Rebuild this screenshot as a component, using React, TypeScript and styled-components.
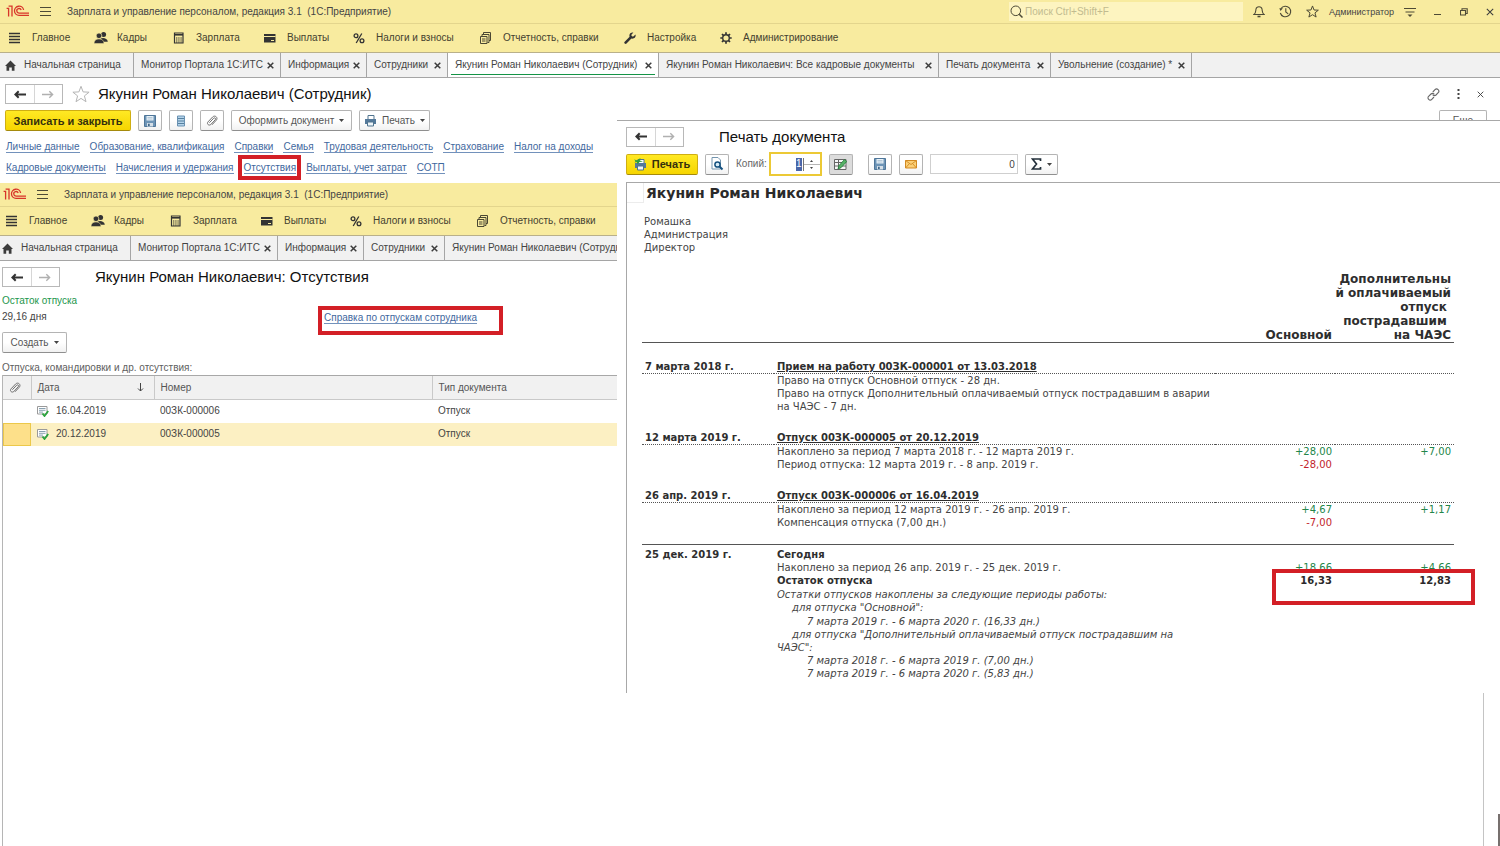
import React from "react";
import styled, { createGlobalStyle, css } from "styled-components";

const Global = createGlobalStyle`
  *, *::before, *::after { box-sizing: border-box; }
  html, body { margin: 0; background: #fff; }
  body { font: 10px/14px "Liberation Sans", Arial, sans-serif; color: #444; }
  button, input { font: inherit; color: inherit; margin: 0; padding: 0; }
  button { cursor: pointer; }
  h1, h2, p { margin: 0; font-weight: normal; }
  svg { display: block; flex: none; }
`;

/* ---------- icons ---------- */

const Svg = ({ w = 14, h = w, vb, children }: { w?: number; h?: number; vb?: string; children: React.ReactNode }) => (
  <svg width={w} height={h} viewBox={vb ?? `0 0 ${w} ${h}`} fill="none" aria-hidden="true">
    {children}
  </svg>
);

const Logo = () => (
  <Svg w={24} h={13}>
    <g stroke="#d8352a" strokeWidth="1.3">
      <path d="M.6 3.400H2.600V11.500M2.600 1.200H6V11.500" />
      <path d="M17.600 5A4.600 4.600 0 1 0 13 10.400H23" />
      <path d="M15.200 5A2.300 2.300 0 1 0 13 8.100H23" />
    </g>
  </Svg>
);
const Burger = () => (
  <Svg w={11}>
    <path d="M0 1.500h11M0 5.500h11M0 9.500h11" stroke="#4d4a36" />
  </Svg>
);
const ListIcon = () => (
  <Svg w={12}>
    <path d="M0 1.500h11M0 4.500h11M0 7.500h11M0 10.500h11" stroke="#333" strokeWidth="1.600" />
  </Svg>
);
const People = () => (
  <Svg w={14}>
    <g fill="#333">
      <circle cx="9.600" cy="3.600" r="2.500" />
      <path d="M6.600 7.600c2-1.400 6.900-.6 7.200 3.200H9Z" />
      <circle cx="5" cy="4.800" r="2.800" stroke="#f8eb9f" strokeWidth=".7" />
      <path d="M0 12.600C.2 9.200 2 8 5 8s4.800 1.200 5 4.600Z" stroke="#f8eb9f" strokeWidth=".5" />
    </g>
  </Svg>
);
const Calc = () => (
  <Svg w={12}>
    <path d="M1.500 1h8.500v10H1.500Z" stroke="#333" strokeWidth="1.200" />
    <path d="M1.500 2.800h8.500" stroke="#333" strokeWidth="1.600" />
    <path d="M3 6h6M3 8h6M3 10h6" stroke="#333" strokeWidth="1.200" strokeDasharray="1.400 .8" />
  </Svg>
);
const Card = () => (
  <Svg w={12}>
    <path d="M0 2h11.500v8.500H0Z" fill="#333" />
    <path d="M0 4.500h11.500M7 8.500h3" stroke="#f8eb9f" />
  </Svg>
);
const Percent = () => (
  <Svg w={12}>
    <g stroke="#333" strokeWidth="1.300">
      <circle cx="3" cy="3.800" r="1.900" />
      <circle cx="9" cy="8.700" r="1.900" />
      <path d="M8.800 1.500 3.200 11" />
    </g>
  </Svg>
);
const Docs = () => (
  <Svg w={12}>
    <g stroke="#4a4733">
      <path d="M3.500 3V.5h7v8H9M2 5V2.500h7v8H7.500" />
      <path d="M.5 4.500h6.500v7H.5Z" />
      <path d="M2 7h3.500M2 9h3.500" />
    </g>
  </Svg>
);
const Wrench = () => (
  <Svg w={12}>
    <path d="M1.600 10.600 7 5.200" stroke="#333" strokeWidth="2.600" strokeLinecap="round" />
    <path d="M11.500 2.600 9.300 4.600 7.600 4.400 7.400 2.700 9.400.5C7 0 4.900 1.800 5.500 4.400L7.500 6.500C10.200 7.200 12.200 5 11.500 2.600Z" fill="#333" />
  </Svg>
);
const Gear = () => (
  <Svg w={12}>
    <circle cx="6" cy="6" r="3.300" stroke="#333" strokeWidth="1.400" />
    <path d="M6 .3v2M6 9.700v2M.3 6h2M9.700 6h2M2 2l1.400 1.400M8.600 8.600 10 10M2 10l1.400-1.400M8.600 3.400 10 2" stroke="#333" strokeWidth="1.700" />
  </Svg>
);
const Home = () => (
  <Svg w={11}>
    <path d="M5.500.5 11 6H9.500v4.800H6.800V7.500H4.200v3.300H1.500V6H0Z" fill="#3c3c3c" />
  </Svg>
);
const Cross = ({ size = 7, thin = false }: { size?: number; thin?: boolean }) => (
  <Svg w={size} vb="0 0 7 7">
    <path d="m.7.7 5.600 5.600M6.300.7.7 6.300" stroke="#3c3c3c" strokeWidth={thin ? 0.9 : 1.5} />
  </Svg>
);
const Arrow = ({ muted, flip }: { muted?: boolean; flip?: boolean }) => (
  <Svg w={12} h={9}>
    <path
      d={flip ? "M0 4.500h10M7.300 1.300 10.600 4.500 7.300 7.700" : "M12 4.500H2M4.700 1.300 1.400 4.500l3.300 3.200"}
      stroke={muted ? "#b0b0b0" : "#333"}
      strokeWidth={muted ? 1.4 : 2}
    />
  </Svg>
);
const Star = ({ size = 13, color = "#4d4a36" }: { size?: number; color?: string }) => (
  <Svg w={size} vb="0 0 18 18">
    <path d="m9 1.300 2.100 5.600 6 .3-4.700 3.700 1.600 5.800L9 13.400l-5 3.300 1.600-5.800L.9 7.200l6-.3Z" stroke={color} strokeWidth={18 / size} />
  </Svg>
);
const Search = () => (
  <Svg w={13}>
    <circle cx="5.800" cy="5.800" r="4.800" stroke="#4d4a36" />
    <path d="m9.200 9.200 3.300 3.300" stroke="#4d4a36" strokeWidth="1.500" />
  </Svg>
);
const Bell = () => (
  <Svg w={12} h={13}>
    <path d="M1 9.500C3 8 2.600 6 3 4c.6-3 5.400-3 6 0 .4 2 0 4 2 5.500Z" stroke="#4d4a36" strokeWidth="1.100" />
    <path d="M4.500 11.500h3" stroke="#4d4a36" strokeWidth="1.600" />
  </Svg>
);
const History = () => (
  <Svg w={13}>
    <path d="M2 3.500A5.300 5.300 0 1 1 1.300 8M6.800 3.200v3.700l2.400 2" stroke="#4d4a36" strokeWidth="1.100" />
    <path d="M.3 3.200h3.600L1.500 6Z" fill="#4d4a36" />
  </Svg>
);
const MenuDown = () => (
  <Svg w={12}>
    <path d="M0 2.500h12M1.500 6h9" stroke="#4d4a36" />
    <path d="M3.500 8.500h5L6 11Z" fill="#4d4a36" />
  </Svg>
);
const Minimize = () => (
  <Svg w={8}>
    <path d="M0 6.500h7" stroke="#4d4a36" />
  </Svg>
);
const Restore = () => (
  <Svg w={8}>
    <path d="M.5 2.500h5v4.500h-5ZM2 2.500V.8h5.200v4.700H5.500" stroke="#4d4a36" strokeWidth="1.100" />
  </Svg>
);
const LinkIcon = () => (
  <Svg w={13}>
    <g stroke="#666" strokeWidth="1.100">
      <path d="M5.800 4 8 1.700a2.100 2.100 0 0 1 3.200 3L9 7C8 8 6.500 7.800 5.600 6.600" />
      <path d="M7 9 4.800 11.300a2.100 2.100 0 0 1-3.200-3L4 6c1-1 2.500-.8 3.400.4" />
    </g>
  </Svg>
);
const Dots = () => (
  <Svg w={3} h={10}>
    <path d="M.5 0h2v2h-2ZM.5 4h2v2h-2ZM.5 8h2v2h-2Z" fill="#444" />
  </Svg>
);
const Floppy = () => (
  <Svg w={12}>
    <path d="M.5.5h11v11h-11Z" fill="#6d94b6" stroke="#4f7699" />
    <path d="M2.500 1h7v4.500h-7Z" fill="#e9f2f8" />
    <path d="M3 8h6v3.500H3Z" fill="#d5dfe7" />
    <path d="M3.500 2.500h5M3.500 4h5" stroke="#9db6c9" strokeWidth=".7" />
    <path d="M4 8.800h1.700v2.200H4Z" fill="#3f6687" />
  </Svg>
);
const Sheet = () => (
  <Svg w={12}>
    <path d="M2.500 1h7v10h-7Z" fill="#b4d3ea" stroke="#6991b2" />
    <path d="M3 3.500h6M3 6h6M3 8.500h6" stroke="#55809f" />
  </Svg>
);
const Clip = () => (
  <Svg w={12}>
    <path d="m3.400 7.700 4.300-4.500c1.100-1 2.600.4 1.600 1.500L4.800 9.500C3 11.200.3 8.900 2 6.900l4.700-5c2.400-2.200 5.700.8 3.600 3.300L6 9.800" stroke="#707070" />
  </Svg>
);
const Printer = ({ colored }: { colored?: boolean }) => (
  <Svg w={13}>
    <path d="M4 1.500h6v4H4Z" fill="#fff" stroke="#50748f" />
    <path d="M1 5h11v5H1Z" fill="#54799a" />
    <path d="M3.500 8h6v4h-6Z" fill="#eef5f9" stroke="#50748f" />
    {colored && <path d="m0 1.500 3 .8L6.500 0 5.800 2.500 9 3.500 5.500 4 3.500 6.500 2.800 4 .5 4.500 1.500 3Z" fill="#2f9e3e" />}
  </Svg>
);
const Preview = () => (
  <Svg w={14}>
    <path d="M2 .5h6l2.500 2.500v9H2Z" fill="#fff" stroke="#7495ae" />
    <circle cx="7.500" cy="7.500" r="2.600" fill="#d7ecf7" stroke="#15517f" strokeWidth="1.500" />
    <path d="m9.500 9.500 3 3" stroke="#15517f" strokeWidth="2" />
  </Svg>
);
const GridEdit = () => (
  <Svg w={13}>
    <path d="M.5 1.500h11.500v10H.5ZM.5 4.500H12M.5 8H12M4.500 1.500v10" fill="#f7f7f7" stroke="#666" />
    <path d="m4 11 1-3.500L10.500 1.500l2.300 2L7 9.700Z" fill="#58b267" stroke="#217a36" strokeWidth=".8" />
  </Svg>
);
const Mail = () => (
  <Svg w={12}>
    <path d="M.5 2.500h11v7.500H.5Z" fill="#fbd078" stroke="#d38a22" />
    <path d="m.5 2.500 5.500 4 5.500-4M.5 10 4.500 5.500M11.500 10 7.500 5.500" stroke="#d38a22" strokeWidth=".9" />
  </Svg>
);
const Sigma = () => (
  <Svg w={11} h={12}>
    <path d="M9.500 3V1H1.500L5.500 6 1.500 11h8V9" stroke="#222f3a" strokeWidth="1.700" />
  </Svg>
);
const Caret = () => (
  <Svg w={5} h={3}>
    <path d="M0 0h5L2.500 3Z" fill="#444" />
  </Svg>
);
const SpinMark = ({ up }: { up?: boolean }) => (
  <Svg w={3} h={2}>
    <path d={up ? "M0 2h3L1.500 0Z" : "M0 0h3L1.500 2Z"} fill="#444" />
  </Svg>
);
const SortArrow = () => (
  <Svg w={7} h={9}>
    <path d="M3.500 0v8M1 5.500 3.500 8 6 5.500" stroke="#444" />
  </Svg>
);
const DocPosted = () => (
  <Svg w={12} h={11}>
    <path d="M.5.5h9.500v7.500H.5Z" fill="#fff" stroke="#9a9a9a" />
    <path d="M2 2.500h6.500M2 4.300h6.500M2 6.100h4" stroke="#7c96a8" strokeWidth=".9" />
    <path d="m5.500 7.500 2 2.500 3.700-5" stroke="#2aa43c" strokeWidth="1.800" />
  </Svg>
);

/* ---------- application header ---------- */

const TitleBar = styled.header<{ $inset: number }>`
  display: flex;
  align-items: center;
  height: 24px;
  padding-left: ${(p) => p.$inset}px;
  background: #f8eb9f;
  border-bottom: 1px solid #e3d58d;
  white-space: pre;
`;
const BareButton = styled.button`
  display: flex;
  align-items: center;
  justify-content: center;
  border: 0;
  background: none;
`;
const AppMenu = styled(BareButton)`
  margin: 0 16px 0 10px;
`;
const SearchBox = styled.label`
  display: flex;
  align-items: center;
  gap: 2px;
  width: 234px;
  height: 19px;
  margin-left: auto;
  padding-left: 1px;
  background: #fdf4c0;
`;
const SearchInput = styled.input`
  flex: 1;
  min-width: 0;
  border: 0;
  outline: 0;
  background: none;
  &::placeholder { color: #c2bb90; opacity: 1; }
`;
const TitleTools = styled.div`
  display: flex;
  align-items: center;
  gap: 14px;
  padding: 0 10px;
`;
const UserButton = styled(BareButton)`
  margin: 0 -4px;
  font-size: 9px;
`;
const WindowTools = styled.div`
  display: flex;
  align-items: center;
  gap: 18px;
  padding: 0 6px 0 8px;
`;
const SectionNav = styled.nav<{ $inset: number }>`
  display: flex;
  height: 29px;
  padding-left: ${(p) => p.$inset}px;
  background: #f8eb9f;
  border-bottom: 1px solid #b9b08a;
  overflow: hidden;
`;
const SectionButton = styled(BareButton)<{ $width: number }>`
  flex: 0 0 ${(p) => p.$width}px;
  justify-content: flex-start;
  gap: 9px;
  color: #44412f;
  white-space: nowrap;
`;
const IconSlot = styled.span`
  display: flex;
  justify-content: flex-start;
  width: 14px;
`;
const TabStrip = styled.div`
  display: flex;
  height: 25px;
  background: #f1f1f1;
  border-bottom: 1px solid #a5a5a5;
  overflow: hidden;
`;
const Tab = styled.div<{ $width: number; $active?: boolean }>`
  display: flex;
  align-items: center;
  justify-content: space-between;
  flex: 0 0 ${(p) => p.$width}px;
  padding: 0 6px 0 7px;
  border-right: 1px solid #a5a5a5;
  white-space: nowrap;
  ${(p) =>
    p.$active &&
    css`
      background: linear-gradient(#159447, #159447) center 21px / calc(100% - 6px) 1px no-repeat #fff;
    `}
`;
const HomeTab = styled(Tab)<{ $inset: number }>`
  justify-content: flex-start;
  gap: 8px;
  padding-left: ${(p) => p.$inset}px;
`;
const TabLabel = styled(BareButton)`
  color: #444;
`;

const SECTIONS: [string, React.FC, number][] = [
  ["Главное", ListIcon, 85],
  ["Кадры", People, 79],
  ["Зарплата", Calc, 91],
  ["Выплаты", Card, 89],
  ["Налоги и взносы", Percent, 127],
  ["Отчетность, справки", Docs, 144],
  ["Настройка", Wrench, 96],
  ["Администрирование", Gear, 120],
];
const TABS: [string, number][] = [
  ["Монитор Портала 1С:ИТС", 147],
  ["Информация", 86],
  ["Сотрудники", 81],
  ["Якунин Роман Николаевич (Сотрудник)", 211],
  ["Якунин Роман Николаевич: Все кадровые документы", 280],
  ["Печать документа", 112],
  ["Увольнение (создание) *", 141],
];

const Chrome = ({ inner }: { inner?: boolean }) => (
  <>
    <TitleBar $inset={inner ? 3 : 6}>
      <Logo />
      <AppMenu aria-label="Меню">
        <Burger />
      </AppMenu>
      <span>{"Зарплата и управление персоналом, редакция 3.1  (1С:Предприятие)"}</span>
      {!inner && (
        <>
          <SearchBox>
            <Search />
            <SearchInput type="search" aria-label="Поиск" placeholder="Поиск Ctrl+Shift+F" />
          </SearchBox>
          <TitleTools>
            <BareButton aria-label="Уведомления"><Bell /></BareButton>
            <BareButton aria-label="История"><History /></BareButton>
            <BareButton aria-label="Избранное"><Star /></BareButton>
            <UserButton>Администратор</UserButton>
            <BareButton aria-label="Сервис"><MenuDown /></BareButton>
          </TitleTools>
          <WindowTools>
            <BareButton aria-label="Свернуть"><Minimize /></BareButton>
            <BareButton aria-label="Восстановить"><Restore /></BareButton>
            <BareButton aria-label="Закрыть"><Cross size={8} thin /></BareButton>
          </WindowTools>
        </>
      )}
    </TitleBar>
    <SectionNav $inset={inner ? 6 : 9}>
      {SECTIONS.slice(0, inner ? 6 : 8).map(([name, Icon, width]) => (
        <SectionButton key={name} $width={width}>
          <IconSlot><Icon /></IconSlot>
          {name}
        </SectionButton>
      ))}
    </SectionNav>
    <TabStrip>
      <HomeTab $width={inner ? 131 : 134} $inset={inner ? 2 : 5}>
        <Home />
        <TabLabel>Начальная страница</TabLabel>
      </HomeTab>
      {TABS.slice(0, inner ? 4 : 7).map(([name, width], i) => (
        <Tab key={name} $width={width} $active={!inner && i === 3}>
          <TabLabel>{name}</TabLabel>
          <BareButton aria-label={`Закрыть: ${name}`}><Cross /></BareButton>
        </Tab>
      ))}
    </TabStrip>
  </>
);

/* ---------- shared form parts ---------- */

const Push = styled.button<{ $width?: number; $primary?: boolean; $pressed?: boolean }>`
  display: flex;
  align-items: center;
  justify-content: center;
  gap: 5px;
  flex: none;
  width: ${(p) => (p.$width ? `${p.$width}px` : "auto")};
  height: 21px;
  border: 1px solid ${(p) => (p.$primary ? "#cfae12" : "#b4b4b4")};
  border-bottom-color: ${(p) => (p.$primary ? "#a58a0c" : "#8f8f8f")};
  border-radius: 2px;
  background: ${(p) => (p.$primary ? "linear-gradient(#ffe924, #f6d500)" : p.$pressed ? "#dcdcdc" : "linear-gradient(#fff 50%, #f1f1f1)")};
  font-size: ${(p) => (p.$primary ? 11 : 10)}px;
  font-weight: ${(p) => (p.$primary ? "bold" : "normal")};
  color: ${(p) => (p.$primary ? "#35300c" : "#555")};
  white-space: nowrap;
`;
const NavPair = styled.div`
  display: flex;
  flex: none;
  width: 58px;
  height: 20px;
  border: 1px solid #b8b8b8;
`;
const NavButton = styled(BareButton)`
  flex: 1;
  & + & { border-left: 1px solid #d6d6d6; }
`;
const Title = styled.h1`
  font-size: 15px;
  line-height: 20px;
  color: #111;
  white-space: nowrap;
`;
const Link = styled.a`
  color: #3f689e;
  line-height: 12px;
  height: 12px;
  text-decoration: none;
  border-bottom: 1px solid #7291bb;
  white-space: nowrap;
`;

const BackForward = () => (
  <NavPair>
    <NavButton aria-label="Назад"><Arrow /></NavButton>
    <NavButton aria-label="Вперед"><Arrow muted flip /></NavButton>
  </NavPair>
);

/* ---------- page ---------- */

const Page = styled.div`
  display: flex;
  flex-direction: column;
  min-height: 100vh;
`;
const Heading = styled.div`
  display: flex;
  align-items: center;
  height: 32px;
  padding: 0 16px 0 5px;
`;
const Favorite = styled(BareButton)`
  margin: 0 8px 0 9px;
`;
const HeadingTools = styled.div`
  display: flex;
  align-items: center;
  gap: 17px;
  margin-left: auto;
`;
const Split = styled.main`
  display: grid;
  grid-template-columns: minmax(0, 617fr) minmax(0, 883fr);
  flex: 1;
`;
const Column = styled.div`
  display: flex;
  flex-direction: column;
  min-width: 0;
`;

/* employee card */
const CommandBar = styled.div`
  display: flex;
  gap: 7px;
  padding-left: 5px;
`;
const Links = styled.nav`
  display: flex;
  gap: 10px;
  height: 14px;
  padding-left: 6px;
`;
const LinkLines = styled.div`
  display: flex;
  flex-direction: column;
  gap: 7px;
  height: 52px;
  padding-top: 10px;
`;
const Marked = styled.span`
  display: flex;
  position: relative;
  &::after {
    content: "";
    position: absolute;
    inset: -7px -5px -4px -6px;
    border: 4px solid #d31f26;
    pointer-events: none;
  }
`;

/* absences window */
const AbsenceBody = styled.section`
  display: flex;
  flex: 1;
  flex-direction: column;
  align-items: flex-start;
  padding-left: 2px;
`;
const AbsenceHead = styled.div`
  display: flex;
  align-items: center;
  gap: 35px;
  height: 32px;
`;
const Balance = styled.div`
  display: flex;
  align-items: flex-start;
  height: 39px;
`;
const BalanceText = styled.div`
  width: 316px;
  line-height: 16px;
`;
const BalanceName = styled.p`
  color: #23964c;
`;
const RedFrame = styled.div`
  display: flex;
  width: 185px;
  height: 29px;
  margin-top: 13px;
  padding: 2px 2px 0;
  border: 4px solid #d31f26;
`;
const Caption = styled.p`
  padding-top: 7px;
  line-height: 15px;
  color: #606060;
`;
const TableArea = styled.div`
  flex: 1;
  width: 100%;
  border-left: 1px solid #b5b5b5;
`;
const AbsenceTable = styled.table`
  width: 100%;
  table-layout: fixed;
  border-collapse: collapse;
  th, td { padding: 0 6px; text-align: left; font-weight: normal; }
  th {
    height: 24px;
    background: #f1f1f1;
    border: solid #c9c9c9;
    border-width: 1px 0 1px 1px;
    border-top-color: #a8a8a8;
    color: #555;
  }
  th:first-child { border-left: 0; }
  td { height: 23px; }
`;
const DocRow = styled.tr<{ $selected?: boolean }>`
  ${(p) => p.$selected && css`
    background: #fcf0c3;
    td:first-child { background: #fde08a; box-shadow: inset 0 0 0 1px #ecc84a; }
  `}
`;
const Inline = styled.span<{ $between?: boolean }>`
  display: flex;
  align-items: center;
  gap: 7px;
  ${(p) => p.$between && "justify-content: space-between; padding-right: 4px;"}
`;

/* print window */
const MoreStrip = styled.div`
  display: flex;
  justify-content: flex-end;
  height: 10px;
  padding-right: 13px;
  overflow: hidden;
`;
const PrintPanel = styled.section`
  display: flex;
  flex-direction: column;
  height: 573px;
  padding-left: 9px;
  border-top: 1px solid #a8a8a8;
`;
const PrintHead = styled.div`
  display: flex;
  align-items: center;
  gap: 35px;
  height: 31px;
`;
const PrintBar = styled.div`
  display: flex;
  align-items: center;
  height: 24px;
  gap: 7px;
`;
const CopiesLabel = styled.label`
  display: flex;
  align-items: center;
  gap: 2px;
  color: #666;
`;
const Spin = styled.span`
  display: flex;
  align-items: center;
  justify-content: flex-end;
  width: 53px;
  height: 24px;
  border: 2px solid #ecc935;
  background: #fff;
`;
const CopiesInput = styled.input`
  width: 6px;
  height: 13px;
  border: 0;
  background: #4a66a8;
  color: #fff;
  text-align: center;
`;
const SpinArrows = styled.span`
  display: flex;
  flex-direction: column;
  align-items: center;
  gap: 5px;
  width: 17px;
  margin-left: 1px;
  border-left: 1px solid #777;
  background: linear-gradient(#b5b5b5, #b5b5b5) center / 100% 1px no-repeat;
  padding: 2px 0;
`;
const Group = styled.div`
  display: flex;
  gap: 7px;
  margin-left: 8px;
`;
const SumInput = styled.input`
  width: 88px;
  height: 20px;
  border: 1px solid #cfcfcf;
  padding-right: 2px;
  text-align: right;
`;
const Report = styled.article`
  flex: 1;
  margin-top: 6px;
  border: solid #a8a8a8;
  border-width: 1px 0 0 1px;
  padding-right: 46px;
  font: 10px/13px "DejaVu Sans", Verdana, sans-serif;
  color: #444;
`;
const ReportTop = styled.div`
  display: flex;
  gap: 2px;
`;
const CornerCell = styled.div`
  width: 17px;
  border: solid #ececec;
  border-width: 0 1px 1px 0;
`;
const ReportName = styled.h2`
  font-size: 14px;
  line-height: 20px;
  font-weight: bold;
  color: #2a2a2a;
`;
const Person = styled.p`
  padding: 12px 0 17px 17px;
`;
const Ledger = styled.table`
  width: calc(100% - 15px);
  margin-left: 15px;
  table-layout: fixed;
  border-collapse: collapse;
  th, td { padding: 0 3px; vertical-align: top; text-align: left; font-weight: normal; }
  thead th {
    height: 71px;
    padding-left: 0;
    border-bottom: 1px solid #555;
    font-size: 12px;
    line-height: 14px;
    font-weight: bold;
    text-align: right;
    vertical-align: bottom;
    color: #2e2e2e;
    white-space: nowrap;
  }
`;
const EntryHead = styled.tr<{ $plain?: boolean }>`
  th {
    height: 13px;
    border-bottom: ${(p) => (p.$plain ? "0" : "1px dotted #555")};
    font-weight: bold;
    color: #2e2e2e;
    white-space: nowrap;
  }
`;
const Gap = styled.tr<{ $h: number; $rule?: boolean }>`
  td {
    height: ${(p) => p.$h}px;
    ${(p) => p.$rule && "border-bottom: 1px solid #555;"}
  }
`;
const Amount = styled.td<{ $kind?: "plus" | "minus" | "total" }>`
  && {
    text-align: right;
    color: ${(p) => (p.$kind === "plus" ? "#23864a" : p.$kind === "minus" ? "#c21f2c" : "#2a2a2a")};
    font-weight: ${(p) => (p.$kind === "total" ? "bold" : "normal")};
  }
`;
const TotalCell = styled(Amount)`
  position: relative;
  &::after {
    content: "";
    position: absolute;
    top: -5px;
    left: 57px;
    width: 203px;
    height: 36px;
    border: 4px solid #d31f26;
    pointer-events: none;
  }
`;
const Underlined = styled.a`
  color: inherit;
`;
const Total = styled.td`
  && { font-weight: bold; color: #2e2e2e; height: 14px; }
`;
const Note = styled.td<{ $level?: number }>`
  && {
    height: ${(p) => (p.$level === 1 ? 14 : 13)}px;
    padding-right: 16px;
    font-style: italic;
    text-indent: ${(p) => (p.$level ?? 0) * 15}px;
  }
`;

const Rest = styled.div`
  display: flex;
  flex: 1;
  align-items: flex-end;
  justify-content: flex-end;
`;
const RestFrame = styled.div`
  align-self: stretch;
  width: 1px;
  margin-right: 14px;
  background: #c4c4c4;
`;
const ScrollMark = styled.div`
  width: 2px;
  height: 32px;
  background: #77706e;
`;

type Line = { text: string; a?: string; b?: string };
const sign = (v?: string) => (v?.startsWith("-") ? "minus" : "plus") as "minus" | "plus";
const Lines = ({ lines }: { lines: Line[] }) => (
  <>
    {lines.map((l) => (
      <tr key={l.text}>
        <td />
        <td>{l.text}</td>
        <Amount $kind={sign(l.a)}>{l.a}</Amount>
        <Amount $kind={sign(l.b)}>{l.b}</Amount>
      </tr>
    ))}
  </>
);
const Entry = ({ date, title, lines, gap, rule }: { date: string; title: string; lines: Line[]; gap: number; rule?: boolean }) => (
  <>
    <EntryHead>
      <th>{date}</th>
      <th><Underlined href="#doc">{title}</Underlined></th>
      <th />
      <th />
    </EntryHead>
    <Lines lines={lines} />
    <Gap $h={gap} $rule={rule}><td colSpan={4} /></Gap>
  </>
);

export default function App() {
  return (
    <Page>
      <Global />
      <Chrome />
      <Heading>
        <BackForward />
        <Favorite aria-label="В избранное"><Star size={18} color="#b5b5b5" /></Favorite>
        <Title>Якунин Роман Николаевич (Сотрудник)</Title>
        <HeadingTools>
          <BareButton aria-label="Ссылка"><LinkIcon /></BareButton>
          <BareButton aria-label="Ещё"><Dots /></BareButton>
          <BareButton aria-label="Закрыть"><Cross thin /></BareButton>
        </HeadingTools>
      </Heading>
      <Split>
        <Column>
          <CommandBar>
            <Push $primary $width={126}>Записать и закрыть</Push>
            <Push $width={24} aria-label="Записать"><Floppy /></Push>
            <Push $width={24} aria-label="Список"><Sheet /></Push>
            <Push $width={24} aria-label="Файлы"><Clip /></Push>
            <Push $width={121}>Оформить документ <Caret /></Push>
            <Push $width={71}><Printer /> Печать <Caret /></Push>
          </CommandBar>
          <LinkLines>
            <Links>
              {["Личные данные", "Образование, квалификация", "Справки", "Семья", "Трудовая деятельность", "Страхование", "Налог на доходы"].map((t) => (
                <Link key={t} href="#card">{t}</Link>
              ))}
            </Links>
            <Links>
              <Link href="#card">Кадровые документы</Link>
              <Link href="#card">Начисления и удержания</Link>
              <Marked><Link href="#card">Отсутствия</Link></Marked>
              <Link href="#card">Выплаты, учет затрат</Link>
              <Link href="#card">СОТП</Link>
            </Links>
          </LinkLines>
          <Chrome inner />
          <AbsenceBody>
            <AbsenceHead>
              <BackForward />
              <Title as="h2">Якунин Роман Николаевич: Отсутствия</Title>
            </AbsenceHead>
            <Balance>
              <BalanceText>
                <BalanceName>Остаток отпуска</BalanceName>
                <p>29,16 дня</p>
              </BalanceText>
              <RedFrame><Link href="#report">Справка по отпускам сотрудника</Link></RedFrame>
            </Balance>
            <Push $width={65}>Создать <Caret /></Push>
            <Caption>Отпуска, командировки и др. отсутствия:</Caption>
            <TableArea>
              <AbsenceTable>
                <colgroup>
                  <col style={{ width: 28 }} />
                  <col style={{ width: 123 }} />
                  <col style={{ width: 278 }} />
                  <col />
                </colgroup>
                <thead>
                  <tr>
                    <th><Clip /></th>
                    <th><Inline $between>Дата <SortArrow /></Inline></th>
                    <th>Номер</th>
                    <th>Тип документа</th>
                  </tr>
                </thead>
                <tbody>
                  <DocRow>
                    <td />
                    <td><Inline><DocPosted /> 16.04.2019</Inline></td>
                    <td>00ЗК-000006</td>
                    <td>Отпуск</td>
                  </DocRow>
                  <DocRow $selected>
                    <td />
                    <td><Inline><DocPosted /> 20.12.2019</Inline></td>
                    <td>00ЗК-000005</td>
                    <td>Отпуск</td>
                  </DocRow>
                </tbody>
              </AbsenceTable>
            </TableArea>
          </AbsenceBody>
        </Column>
        <Column>
          <MoreStrip><Push $width={48}>Еще</Push></MoreStrip>
          <PrintPanel>
            <PrintHead>
              <BackForward />
              <Title as="h2">Печать документа</Title>
            </PrintHead>
            <PrintBar>
              <Push $primary $width={72}><Printer colored /> Печать</Push>
              <Push $width={24} aria-label="Просмотр"><Preview /></Push>
              <CopiesLabel>
                Копий:
                <Spin>
                  <CopiesInput defaultValue="1" />
                  <SpinArrows><SpinMark up /><SpinMark /></SpinArrows>
                </Spin>
              </CopiesLabel>
              <Push $width={24} $pressed aria-label="Редактирование"><GridEdit /></Push>
              <Group>
                <Push $width={24} aria-label="Сохранить"><Floppy /></Push>
                <Push $width={24} aria-label="Отправить"><Mail /></Push>
              </Group>
              <SumInput aria-label="Сумма" defaultValue="0" />
              <Push $width={33} aria-label="Сумма"><Sigma /> <Caret /></Push>
            </PrintBar>
            <Report>
              <ReportTop>
                <CornerCell />
                <ReportName>Якунин Роман Николаевич</ReportName>
              </ReportTop>
              <Person>Ромашка<br />Администрация<br />Директор</Person>
              <Ledger>
                <colgroup>
                  <col style={{ width: 132 }} />
                  <col />
                  <col style={{ width: 120 }} />
                  <col style={{ width: 119 }} />
                </colgroup>
                <thead>
                  <tr>
                    <th />
                    <th />
                    <th>Основной</th>
                    <th>Дополнительны<br />й оплачиваемый<br />отпуск&nbsp;<br />пострадавшим&nbsp;<br />на ЧАЭС</th>
                  </tr>
                </thead>
                <tbody>
                  <Gap $h={18}><td colSpan={4} /></Gap>
                  <Entry
                    date="7 марта 2018 г."
                    title="Прием на работу 00ЗК-000001 от 13.03.2018"
                    lines={[{ text: "Право на отпуск Основной отпуск - 28 дн." }, { text: "Право на отпуск Дополнительный оплачиваемый отпуск пострадавшим в аварии на ЧАЭС - 7 дн." }]}
                    gap={18}
                  />
                  <Entry
                    date="12 марта 2019 г."
                    title="Отпуск 00ЗК-000005 от 20.12.2019"
                    lines={[{ text: "Накоплено за период 7 марта 2018 г. - 12 марта 2019 г.", a: "+28,00", b: "+7,00" }, { text: "Период отпуска: 12 марта 2019 г. - 8 апр. 2019 г.", a: "-28,00" }]}
                    gap={18}
                  />
                  <Entry
                    date="26 апр. 2019 г."
                    title="Отпуск 00ЗК-000006 от 16.04.2019"
                    lines={[{ text: "Накоплено за период 12 марта 2019 г. - 26 апр. 2019 г.", a: "+4,67", b: "+1,17" }, { text: "Компенсация отпуска (7,00 дн.)", a: "-7,00" }]}
                    gap={15}
                    rule
                  />
                  <Gap $h={4}><td colSpan={4} /></Gap>
                  <EntryHead $plain>
                    <th>25 дек. 2019 г.</th>
                    <th>Сегодня</th>
                    <th />
                    <th />
                  </EntryHead>
                  <Lines lines={[{ text: "Накоплено за период 26 апр. 2019 г. - 25 дек. 2019 г.", a: "+18,66", b: "+4,66" }]} />
                  <tr>
                    <td />
                    <Total>Остаток отпуска</Total>
                    <TotalCell $kind="total">16,33</TotalCell>
                    <Amount $kind="total">12,83</Amount>
                  </tr>
                  <tr><td /><Note>Остатки отпусков накоплены за следующие периоды работы:</Note></tr>
                  <tr><td /><Note $level={1}>для отпуска "Основной":</Note></tr>
                  <tr><td /><Note $level={2}>7 марта 2019 г. - 6 марта 2020 г. (16,33 дн.)</Note></tr>
                  <tr><td /><Note $level={1}>для отпуска "Дополнительный оплачиваемый отпуск пострадавшим на ЧАЭС":</Note></tr>
                  <tr><td /><Note $level={2}>7 марта 2018 г. - 6 марта 2019 г. (7,00 дн.)</Note></tr>
                  <tr><td /><Note $level={2}>7 марта 2019 г. - 6 марта 2020 г. (5,83 дн.)</Note></tr>
                </tbody>
              </Ledger>
            </Report>
          </PrintPanel>
          <Rest>
            <RestFrame />
            <ScrollMark />
          </Rest>
        </Column>
      </Split>
    </Page>
  );
}
